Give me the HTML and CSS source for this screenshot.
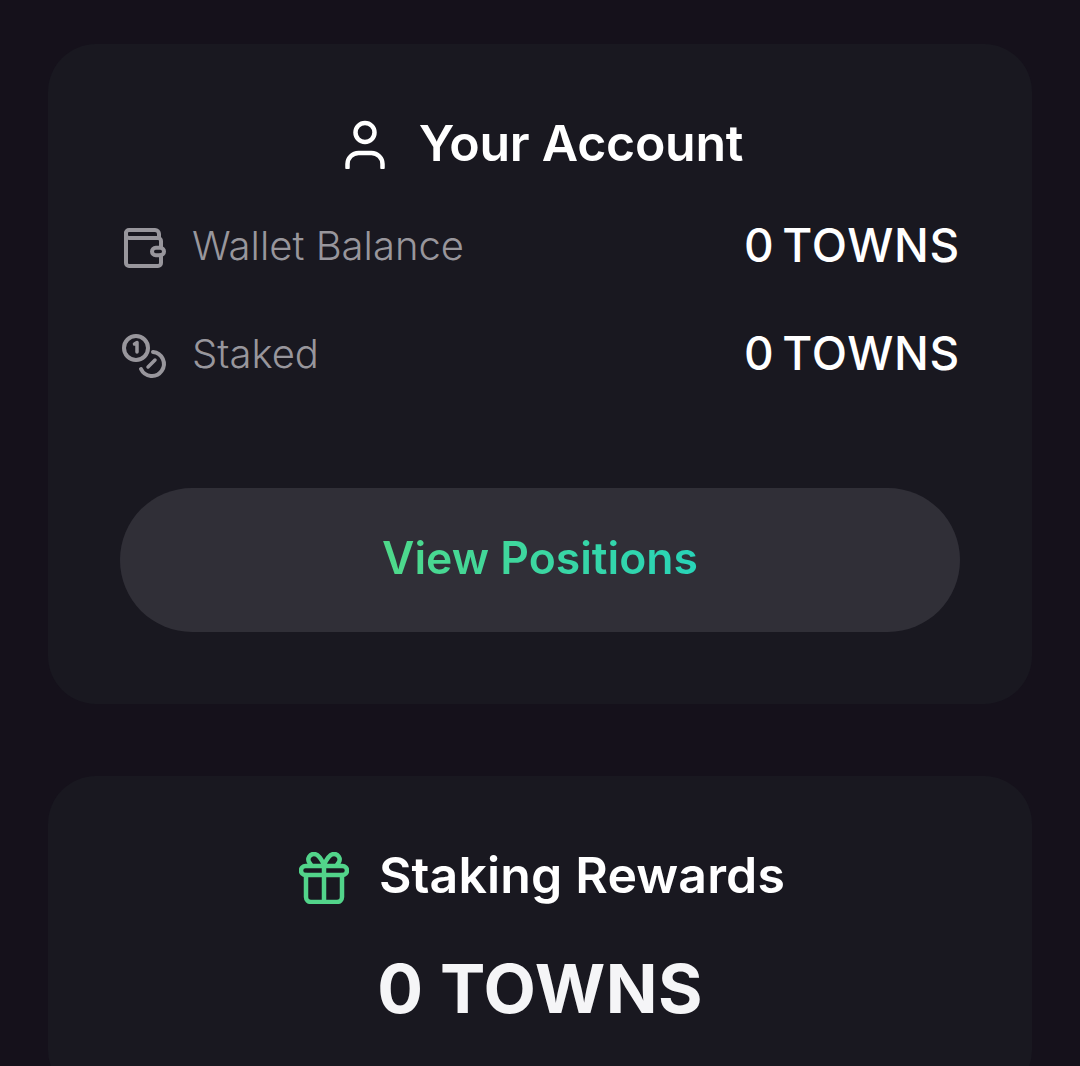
FILE: index.html
```html
<!DOCTYPE html>
<html lang="en">
<head>
    <meta charset="UTF-8">
    <title>Your Account</title>
    <link rel="stylesheet" href="styles.css">
</head>
<body class="page">
    <section class="card accountCard">
        <h2 class="cardTitle accountTitle">
            <svg class="titleIcon" width="40" height="52" viewBox="0 0 40 52" fill="none" stroke="#fff" stroke-width="4.5" stroke-linecap="round">
                <circle cx="20" cy="15.5" r="9.5"/>
                <path d="M2.5 50.5v-3.5a11 11 0 0 1 11-11h13a11 11 0 0 1 11 11v3.5"/>
            </svg>
            <span>Your Account</span>
        </h2>
        <div class="row">
            <div class="rowLabel">
                <svg class="rowIcon" width="44" height="44" viewBox="0 0 44 44" fill="none" stroke="#98969c" stroke-width="4" stroke-linejoin="round" stroke-linecap="round">
                    <path d="M6 9a3 3 0 0 1 3-3h26a4 4 0 0 1 4 4v3"/>
                    <path d="M6 11a3 3 0 0 0 3 3h29a3 3 0 0 1 3 3v6"/>
                    <path d="M6 9v30a3 3 0 0 0 3 3h29a3 3 0 0 0 3-3v-8"/>
                    <rect x="32" y="23.75" width="12" height="7.5" rx="3.75"/>
                </svg>
                <span>Wallet Balance</span>
            </div>
            <div class="rowValue">0 TOWNS</div>
        </div>
        <div class="row">
            <div class="rowLabel">
                <svg class="rowIcon" width="44" height="44" viewBox="0 0 44 44" fill="none" stroke="#98969c" stroke-width="4" stroke-linecap="round" stroke-linejoin="round">
                    <circle cx="16" cy="16" r="12"/>
                    <path d="M14.5 12l2.5-1.5V20" stroke-width="3.5"/>
                    <path d="M33 20A12 12 0 1 1 21 37"/>
                    <path d="M28 35l7-7" stroke-width="3.5"/>
                </svg>
                <span>Staked</span>
            </div>
            <div class="rowValue">0 TOWNS</div>
        </div>
        <button class="viewBtn"><span class="viewText">View Positions</span></button>
    </section>
    <section class="card rewardsCard">
        <h2 class="cardTitle rewardsTitle">
            <svg class="titleIcon giftIcon" width="50" height="52" viewBox="0 0 50 52" fill="none" stroke="#52d48a" stroke-width="4.5" stroke-linecap="round" stroke-linejoin="round">
                <rect x="2" y="14" width="46" height="9" rx="4.5"/>
                <path d="M7 23v22a5 5 0 0 0 5 5h26a5 5 0 0 0 5-5V23"/>
                <path d="M25 14v36"/>
                <path d="M25 13C22 6 19 2 15 2a5.5 5.5 0 0 0-5 8l2 3"/>
                <path d="M25 13C28 6 31 2 35 2a5.5 5.5 0 0 1 5 8l-2 3"/>
            </svg>
            <span>Staking Rewards</span>
        </h2>
        <div class="bigValue">0 TOWNS</div>
    </section>
</body>
</html>
```
FILE: styles.css
```css
html, body {
    margin: 0;
    padding: 0;
}

.page {
    background-color: #15111b;
    font-family: Inter, "Liberation Sans", sans-serif;
    height: 1066px;
    overflow: hidden;
    padding: 44px 48px 0;
    box-sizing: border-box;
}

.card {
    background-color: #191820;
    border-radius: 48px;
    padding: 70px 72px;
}

.accountCard {
    height: 660px;
    box-sizing: border-box;
    margin-bottom: 72px;
}

.cardTitle {
    display: flex;
    justify-content: center;
    align-items: center;
    margin: 0;
    color: #fff;
    font-size: 50px;
    font-weight: 600;
    line-height: 58px;
}

.titleIcon {
    flex: none;
}

.giftIcon {
    margin-top: 6px;
}

.accountTitle {
    gap: 34px;
    margin-bottom: 43px;
    padding-left: 8px;
    letter-spacing: -0.25px;
}

.rewardsTitle {
    gap: 30px;
    margin-bottom: 44px;
    padding-left: 4px;
    letter-spacing: 0.15px;
}

.row {
    display: flex;
    justify-content: space-between;
    align-items: center;
    height: 60px;
    margin-bottom: 48px;
}

.rowLabel {
    display: flex;
    align-items: center;
    gap: 28px;
    color: #98969c;
    font-size: 40px;
    font-weight: 300;
}

.rowIcon {
    flex: none;
    overflow: visible;
    margin-top: 2px;
}

.rowValue {
    color: #fff;
    font-size: 46px;
    font-weight: 500;
    letter-spacing: 0.7px;
    word-spacing: -5px;
}

.viewBtn {
    display: block;
    width: 100%;
    height: 144px;
    margin-top: 105px;
    padding: 0 0 4px;
    border: none;
    border-radius: 72px;
    background-color: #302f37;
    font-family: inherit;
    font-size: 44.5px;
    font-weight: 600;
}

.viewText {
    background: linear-gradient(90deg, #4fd98a, #28d4b8);
    -webkit-background-clip: text;
    background-clip: text;
    color: transparent;
}

.bigValue {
    color: #f5f5f7;
    font-size: 68px;
    font-weight: 700;
    letter-spacing: 0.4px;
    text-align: center;
    line-height: 80px;
}
```
